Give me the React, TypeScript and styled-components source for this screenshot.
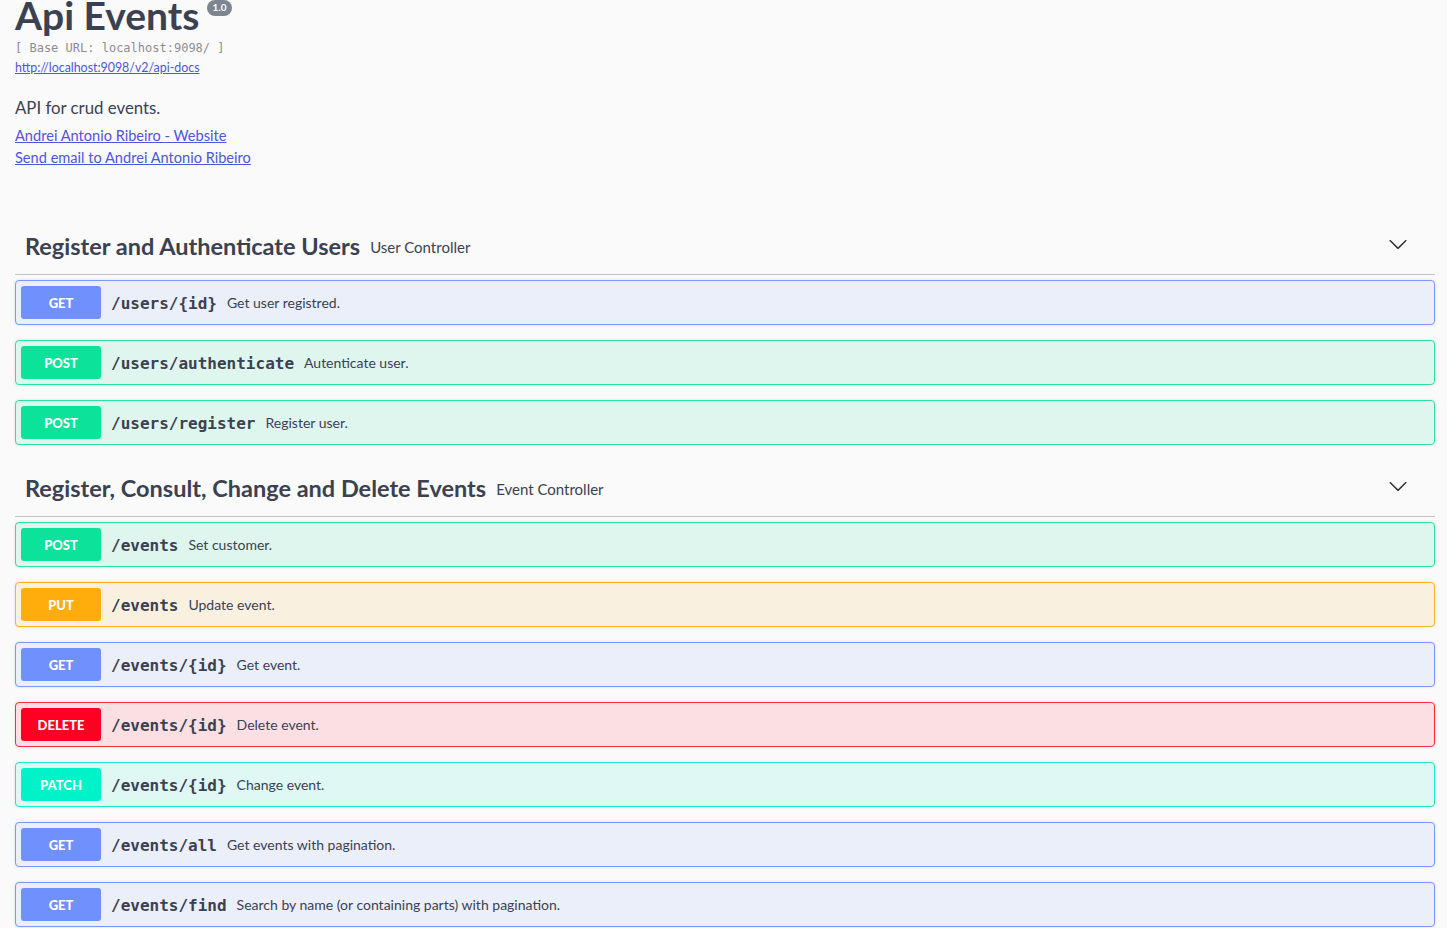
import React from "react";
import styled, { createGlobalStyle } from "styled-components";

type Method = "GET" | "POST" | "PUT" | "DELETE" | "PATCH";

interface Operation {
	method: Method;
	path: string;
	summary: string;
}

interface Tag {
	name: string;
	description: string;
	operations: Operation[];
}

const palette: Record<Method, { badge: string; bg: string; border: string }> = {
	GET: { badge: "#7090fd", bg: "#ebeff9", border: "#7b98fb" },
	POST: { badge: "#0ce29a", bg: "#dff6ee", border: "#2ee2a4" },
	PUT: { badge: "#ffad0d", bg: "#faf0e0", border: "#fdb327" },
	DELETE: { badge: "#ff0022", bg: "#fbdfe2", border: "#ff2a45" },
	PATCH: { badge: "#00f2c9", bg: "#dff8f3", border: "#1aeccb" },
};

const tags: Tag[] = [
	{
		name: "Register and Authenticate Users",
		description: "User Controller",
		operations: [
			{ method: "GET", path: "/users/{id}", summary: "Get user registred." },
			{ method: "POST", path: "/users/authenticate", summary: "Autenticate user." },
			{ method: "POST", path: "/users/register", summary: "Register user." },
		],
	},
	{
		name: "Register, Consult, Change and Delete Events",
		description: "Event Controller",
		operations: [
			{ method: "POST", path: "/events", summary: "Set customer." },
			{ method: "PUT", path: "/events", summary: "Update event." },
			{ method: "GET", path: "/events/{id}", summary: "Get event." },
			{ method: "DELETE", path: "/events/{id}", summary: "Delete event." },
			{ method: "PATCH", path: "/events/{id}", summary: "Change event." },
			{ method: "GET", path: "/events/all", summary: "Get events with pagination." },
			{
				method: "GET",
				path: "/events/find",
				summary: "Search by name (or containing parts) with pagination.",
			},
		],
	},
];

const GlobalStyle = createGlobalStyle`
  html, body {
    margin: 0;
    padding: 0;
    background: #fafafa;
    overflow: hidden;
  }
  body {
    font-family: Lato, "Open Sans", sans-serif;
    color: #3b4151;
  }
`;

const Page = styled.div`
  padding: 0 12px 0 15px;
`;

const Info = styled.div`
  margin-bottom: 49px;
`;

const Title = styled.h2`
  margin: -4px 0 0;
  font-size: 39px;
  line-height: 38px;
  font-weight: 700;
  color: #3b4151;
`;

const Version = styled.small`
  display: inline-block;
  position: relative;
  top: 4px;
  margin-left: 7px;
  padding: 2px 6px 3px;
  border-radius: 57px;
  background: #7d8492;
  color: #fff;
  font-size: 10px;
  line-height: 11px;
  font-weight: 700;
  vertical-align: top;
`;

const BaseUrl = styled.pre`
  margin: 6px 0 0;
  font-family: "DejaVu Sans Mono", monospace;
  font-size: 12px;
  line-height: 16px;
  color: #8d8d93;
`;

const Link = styled.a`
  display: block;
  color: #4f55dc;
  text-decoration: underline;
  font-size: 14.6px;
  line-height: 22px;
`;

const SpecLink = styled(Link)`
  margin-top: 3px;
  font-size: 12.4px;
  line-height: 18px;
`;

const Description = styled.p`
  margin: 20px 0 6px;
  font-size: 16.8px;
  line-height: 22px;
  color: #3b4151;
`;

const TagSection = styled.section`
  margin-bottom: 15px;
`;

const TagHeader = styled.div`
  display: flex;
  align-items: center;
  height: 57px;
  box-sizing: border-box;
  padding: 0 27px 0 10px;
  margin-bottom: 5px;
  border-bottom: 1px solid rgba(59, 65, 81, 0.3);
`;

const TagName = styled.h3`
  margin: 0;
  font-size: 23.5px;
  font-weight: 700;
  color: #3b4151;
`;

const TagDescription = styled.small`
  flex: 1;
  margin-left: 10px;
  font-size: 15px;
  color: #3b4151;
  padding-top: 1px;
`;

const Chevron = styled.svg`
  width: 20px;
  height: 20px;
  margin-top: -4px;
  fill: #303030;
`;

const OpBlock = styled.div<{ $method: Method }>`
  display: flex;
  align-items: center;
  height: 45px;
  box-sizing: border-box;
  padding: 5px;
  margin-bottom: 15px;
  border: 1px solid ${(p) => palette[p.$method].border};
  border-radius: 4px;
  background: ${(p) => palette[p.$method].bg};
  box-shadow: 0 0 3px rgba(0, 0, 0, 0.12);
`;

const MethodBadge = styled.span<{ $method: Method }>`
  flex: none;
  width: 80px;
  height: 33px;
  display: flex;
  align-items: center;
  justify-content: center;
  border-radius: 3px;
  background: ${(p) => palette[p.$method].badge};
  color: #fff;
  font-size: 13px;
  font-weight: 900;
`;

const Path = styled.span`
  margin-left: 10px;
  padding-top: 1px;
  font-family: "DejaVu Sans Mono", monospace;
  font-size: 16px;
  font-weight: 600;
  color: #3b4151;
`;

const Summary = styled.span`
  margin-left: 10px;
  font-size: 14px;
  color: #3b4151;
`;

const ArrowDown = () => (
	<Chevron viewBox="0 0 20 20">
		<path d="M17.418 6.109c.272-.268.709-.268.979 0s.271.701 0 .969l-7.908 7.83c-.27.268-.707.268-.979 0l-7.908-7.83c-.27-.268-.27-.701 0-.969.271-.268.709-.268.979 0L10 13.25l7.418-7.141z" />
	</Chevron>
);

export default function App() {
	return (
		<>
			<GlobalStyle />
			<Page>
				<Info>
					<Title>
						Api Events<Version>1.0</Version>
					</Title>
					<BaseUrl>[ Base URL: localhost:9098/ ]</BaseUrl>
					<SpecLink href="#">http://localhost:9098/v2/api-docs</SpecLink>
					<Description>API for crud events.</Description>
					<Link href="#">Andrei Antonio Ribeiro - Website</Link>
					<Link href="#">Send email to Andrei Antonio Ribeiro</Link>
				</Info>
				{tags.map((tag) => (
					<TagSection key={tag.name}>
						<TagHeader>
							<TagName>{tag.name}</TagName>
							<TagDescription>{tag.description}</TagDescription>
							<ArrowDown />
						</TagHeader>
						{tag.operations.map((op) => (
							<OpBlock key={op.method + op.path} $method={op.method}>
								<MethodBadge $method={op.method}>{op.method}</MethodBadge>
								<Path>{op.path}</Path>
								<Summary>{op.summary}</Summary>
							</OpBlock>
						))}
					</TagSection>
				))}
			</Page>
		</>
	);
}
